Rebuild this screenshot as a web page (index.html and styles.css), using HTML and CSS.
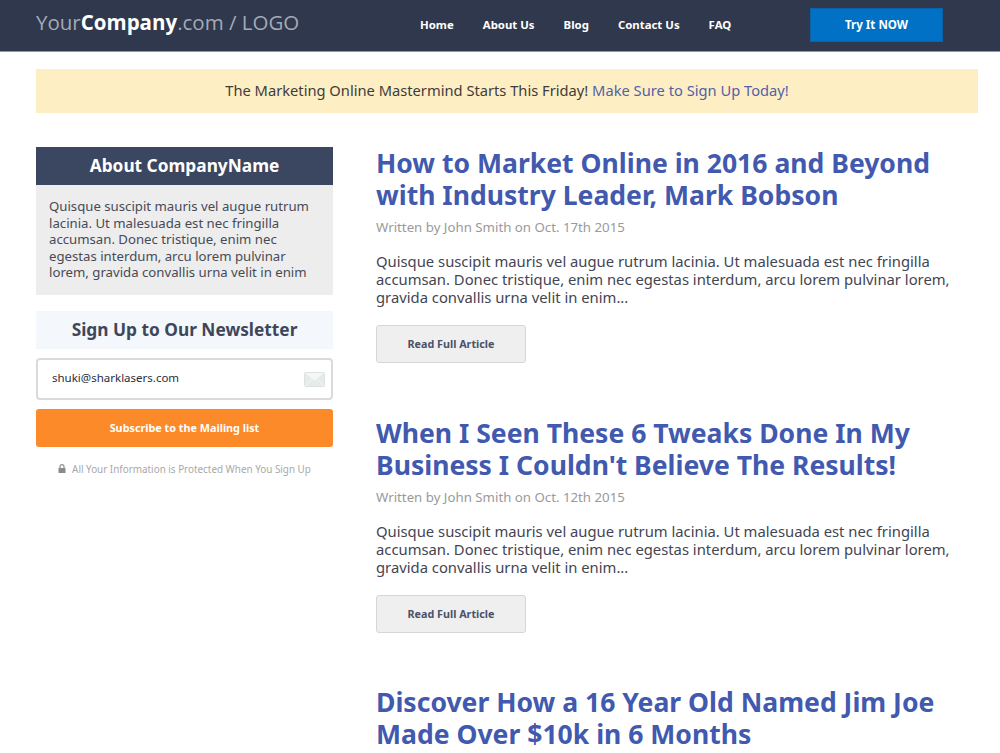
FILE: index.html
```html
<!DOCTYPE html>
<html lang="en">
<head>
    <meta charset="UTF-8">
    <meta name="viewport" content="width=device-width, initial-scale=1.0">
    <title>YourCompany.com</title>
    <link rel="stylesheet" href="styles.css">
</head>
<body>
    <header class="topbar">
        <div class="logo">Your<strong>Company</strong>.com / LOGO</div>
        <nav class="nav">
            <a href="#">Home</a>
            <a href="#">About Us</a>
            <a href="#">Blog</a>
            <a href="#">Contact Us</a>
            <a href="#">FAQ</a>
        </nav>
        <a class="try-btn" href="#">Try It NOW</a>
    </header>

    <div class="notice">The Marketing Online Mastermind Starts This Friday! <a href="#">Make Sure to Sign Up Today!</a></div>

    <div class="content">
        <!-- Sidebar -->
        <aside class="sidebar">
            <div class="about">
                <h3>About CompanyName</h3>
                <p>Quisque suscipit mauris vel augue rutrum lacinia. Ut malesuada est nec fringilla accumsan. Donec tristique, enim nec egestas interdum, arcu lorem pulvinar lorem, gravida convallis urna velit in enim</p>
            </div>
            <h3 class="news-title">Sign Up to Our Newsletter</h3>
            <div class="email-box">
                <span>shuki@sharklasers.com</span>
                <svg class="mail-icon" width="21" height="15" viewBox="0 0 21 15">
                    <rect x="0.5" y="0.5" width="20" height="14" rx="1" fill="#e4ebe9" stroke="#dde3e2"/>
                    <path d="M1 1 L10.5 8.5 L20 1 Z" fill="#f4f7f6"/>
                    <path d="M1 14 L8 7 M20 14 L13 7" fill="none" stroke="#f2f5f4" stroke-width="1"/>
                </svg>
            </div>
            <a class="subscribe" href="#">Subscribe to the Mailing list</a>
            <div class="protected">
                <svg width="8" height="9" viewBox="0 0 8 9">
                    <path d="M2 4V2.6a2 2 0 0 1 4 0V4" fill="none" stroke="#8a8a8a" stroke-width="1.2"/>
                    <rect x="0.5" y="4" width="7" height="5" rx="0.5" fill="#8a8a8a"/>
                </svg>
                <span>All Your Information is Protected When You Sign Up</span>
            </div>
        </aside>

        <!-- Articles -->
        <main class="articles">
            <article class="post">
                <h2>How to Market Online in 2016 and Beyond with Industry Leader, Mark Bobson</h2>
                <div class="byline">Written by John Smith on Oct. 17th 2015</div>
                <p>Quisque suscipit mauris vel augue rutrum lacinia. Ut malesuada est nec fringilla accumsan. Donec tristique, enim nec egestas interdum, arcu lorem pulvinar lorem, gravida convallis urna velit in enim...</p>
                <a class="read-more" href="#">Read Full Article</a>
            </article>
            <article class="post">
                <h2>When I Seen These 6 Tweaks Done In My Business I Couldn't Believe The Results!</h2>
                <div class="byline">Written by John Smith on Oct. 12th 2015</div>
                <p>Quisque suscipit mauris vel augue rutrum lacinia. Ut malesuada est nec fringilla accumsan. Donec tristique, enim nec egestas interdum, arcu lorem pulvinar lorem, gravida convallis urna velit in enim...</p>
                <a class="read-more" href="#">Read Full Article</a>
            </article>
            <article class="post">
                <h2>Discover How a 16 Year Old Named Jim Joe Made Over $10k in 6 Months</h2>
            </article>
        </main>
    </div>
</body>
</html>
```

FILE: styles.css
```css
html, body {
    height: 753px;
    overflow: hidden;
}

body {
    margin: 0;
    font-family: "Noto Sans", sans-serif;
    background-color: #fff;
    color: #3a3f4b;
}

a {
    text-decoration: none;
}

.topbar {
    display: flex;
    align-items: center;
    height: 51px;
    padding-left: 36px;
    background-color: #2f384d;
    border-bottom: 1px solid #8f96a3;
}

.logo {
    width: 384px;
    margin-top: -7px;
    font-family: "Open Sans", sans-serif;
    font-size: 20.5px;
    color: #a4aab5;
}

.logo strong {
    color: #fff;
}

.nav {
    display: flex;
    gap: 29px;
    width: 390px;
    margin-top: -3px;
    font-size: 11.4px;
    font-weight: 700;
}

.nav a {
    color: #fff;
}

.try-btn {
    width: 131px;
    height: 32px;
    margin-top: -2px;
    line-height: 32px;
    text-align: center;
    font-size: 11.6px;
    font-weight: 700;
    color: #fff;
    background-color: #0071c5;
    border: 1px solid #0a62a8;
}

.notice {
    margin: 17px 22px 0 36px;
    height: 44px;
    line-height: 43px;
    text-align: center;
    font-size: 14.7px;
    color: #3f3c3c;
    background-color: #feeec3;
}

.notice a {
    color: #5361a8;
}

.content {
    display: flex;
    gap: 43px;
    margin: 34px 22px 0 36px;
}

.sidebar {
    flex: 0 0 297px;
}

.about h3 {
    margin: 0;
    height: 38px;
    line-height: 38px;
    text-align: center;
    font-size: 17.3px;
    font-weight: 700;
    color: #fff;
    background-color: #3b4660;
}

.about p {
    margin: 0;
    padding: 13px 13px 14px;
    font-size: 13.2px;
    line-height: 16.5px;
    color: #474a57;
    background-color: #ededed;
}

.news-title {
    margin: 16px 0 0;
    height: 38px;
    line-height: 38px;
    text-align: center;
    font-size: 17.3px;
    font-weight: 700;
    color: #3e4759;
    background-color: #f4f7fb;
}

.email-box {
    display: flex;
    justify-content: space-between;
    align-items: center;
    height: 38px;
    margin-top: 9px;
    padding: 0 6px 0 14px;
    font-size: 11.5px;
    color: #2b2d3a;
    border: 2px solid #dadada;
    border-radius: 4px;
}

.email-box span {
    margin-top: -2px;
}

.mail-icon {
    margin-top: 1px;
}

.subscribe {
    display: block;
    height: 38px;
    margin-top: 9px;
    line-height: 37px;
    text-align: center;
    font-size: 10.8px;
    font-weight: 700;
    color: #fff;
    background-color: #fd8a28;
    border-radius: 3px;
}

.protected {
    display: flex;
    justify-content: center;
    align-items: center;
    gap: 6px;
    margin-top: 15px;
    font-size: 9.9px;
    color: #a8a8a8;
}

.articles {
    flex: 1;
}

.post {
    height: 269.5px;
}

.post h2 {
    margin: 0;
    font-size: 26.55px;
    line-height: 32px;
    font-weight: 700;
    color: #4159ae;
}

.byline {
    margin-top: 7px;
    font-size: 13.25px;
    line-height: 18px;
    color: #9a9a9a;
}

.post p {
    margin: 16px 0 0;
    font-size: 14.8px;
    line-height: 18px;
    color: #434552;
}

.read-more {
    display: block;
    width: 148px;
    height: 36px;
    margin-top: 19px;
    line-height: 36px;
    text-align: center;
    font-size: 10.75px;
    font-weight: 700;
    color: #4a5268;
    background-color: #efefef;
    border: 1px solid #d6d6d6;
    border-radius: 3px;
}
```
